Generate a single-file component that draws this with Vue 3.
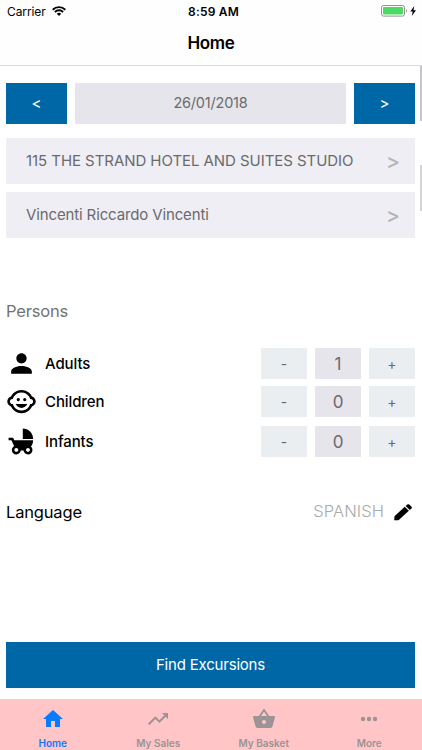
<script setup>
import { reactive } from 'vue'

const selections = ['115 THE STRAND HOTEL AND SUITES STUDIO', 'Vincenti Riccardo Vincenti']

const persons = reactive([
  {
    label: 'Adults',
    count: 1,
    icon: 'M12 12c2.21 0 4-1.79 4-4s-1.79-4-4-4-4 1.79-4 4 1.79 4 4 4zm0 2c-2.67 0-8 1.34-8 4v2h16v-2c0-2.66-5.33-4-8-4z',
  },
  {
    label: 'Children',
    count: 0,
    icon: 'M13.25 10.5a1.25 1.25 0 1 0 2.5 0a1.25 1.25 0 1 0-2.5 0zM8.25 10.5a1.25 1.25 0 1 0 2.5 0a1.25 1.25 0 1 0-2.5 0zM22.94 12.66c.04-.21.06-.43.06-.66s-.02-.45-.06-.66c-.25-1.51-1.36-2.74-2.81-3.17-.53-1.12-1.28-2.1-2.19-2.91C16.36 3.85 14.28 3 12 3s-4.36.85-5.94 2.26c-.92.81-1.67 1.8-2.19 2.91-1.45.43-2.56 1.65-2.81 3.17-.04.21-.06.43-.06.66s.02.45.06.66c.25 1.51 1.36 2.74 2.81 3.17.52 1.11 1.27 2.09 2.17 2.89C7.62 20.14 9.71 21 12 21s4.38-.86 5.97-2.28c.9-.8 1.65-1.79 2.17-2.89 1.44-.43 2.55-1.65 2.8-3.17zM19 14c-.1 0-.19-.02-.29-.03-.2.67-.49 1.29-.86 1.86C16.6 17.74 14.45 19 12 19s-4.6-1.26-5.85-3.17c-.37-.57-.66-1.19-.86-1.86-.1.01-.19.03-.29.03-1.1 0-2-.9-2-2s.9-2 2-2c.1 0 .19.02.29.03.2-.67.49-1.29.86-1.86C7.4 6.26 9.55 5 12 5s4.6 1.26 5.85 3.17c.37.57.66 1.19.86 1.86.1-.01.19-.03.29-.03 1.1 0 2 .9 2 2s-.9 2-2 2zM7.5 14c.76 1.77 2.49 3 4.5 3s3.74-1.23 4.5-3h-9z',
  },
  {
    label: 'Infants',
    count: 0,
    icon: 'M13 2v8h8c0-4.42-3.58-8-8-8zm6.32 13.89C20.37 14.54 21 12.84 21 11H6.44l-.95-2H2v2h2.22s1.89 4.07 2.12 4.42c-1.1.59-1.84 1.75-1.84 3.08C4.5 20.43 6.07 22 8 22c1.76 0 3.22-1.3 3.46-3h2.08c.24 1.7 1.7 3 3.46 3 1.93 0 3.5-1.57 3.5-3.5 0-1.04-.46-1.97-1.18-2.61zM8 20c-.83 0-1.5-.67-1.5-1.5S7.17 17 8 17s1.5.67 1.5 1.5S8.83 20 8 20zm9 0c-.83 0-1.5-.67-1.5-1.5s.67-1.5 1.5-1.5 1.5.67 1.5 1.5-.67 1.5-1.5 1.5z',
  },
])

const tabs = [
  { label: 'Home', active: true, icon: 'M10 20v-6h4v6h5v-8h3L12 3 2 12h3v8z' },
  { label: 'My Sales', icon: 'M16 6l2.29 2.29-4.88 4.88-4-4L2 16.59 3.41 18l6-6 4 4 6.3-6.29L22 12V6z' },
  {
    label: 'My Basket',
    icon: 'M17.21 9l-4.38-6.56c-.19-.28-.51-.42-.83-.42-.32 0-.64.14-.83.43L6.79 9H2c-.55 0-1 .45-1 1 0 .09.01.18.04.27l2.54 9.27c.23.84 1 1.46 1.92 1.46h13c.92 0 1.69-.62 1.93-1.46l2.54-9.27L23 10c0-.55-.45-1-1-1h-4.79zM9 9l3-4.4L15 9H9zm3 8c-1.1 0-2-.9-2-2s.9-2 2-2 2 .9 2 2-.9 2-2 2z',
  },
  {
    label: 'More',
    icon: 'M6 9.8a2.2 2.2 0 1 0 0 4.4a2.2 2.2 0 1 0 0-4.4zM12 9.8a2.2 2.2 0 1 0 0 4.4a2.2 2.2 0 1 0 0-4.4zM18 9.8a2.2 2.2 0 1 0 0 4.4a2.2 2.2 0 1 0 0-4.4z',
  },
]
</script>

<template>
  <div class="screen">
    <header class="header">
      <div class="status">
        <div class="status-left">
          <span class="carrier">Carrier</span>
          <svg class="wifi" viewBox="0 0 14 10">
            <g fill="none" stroke="#000" stroke-width="1.9">
              <path d="M.7 3.7a9 9 0 0 1 12.6 0" />
              <path d="M2.9 6a5.8 5.8 0 0 1 8.2 0" />
            </g>
            <path d="M7 10L4.8 7.8a3.1 3.1 0 0 1 4.4 0z" />
          </svg>
        </div>
        <span class="clock">8:59 AM</span>
        <div class="status-right">
          <svg class="battery" viewBox="0 0 36 12">
            <rect x=".5" y=".5" width="23" height="10.6" rx="2" fill="#fff" stroke="#929292" />
            <rect x="2" y="2" width="20" height="7.6" rx=".8" fill="#4cd964" />
            <path d="M25 4v3.600c1.300-.6 1.300-3 0-3.600z" fill="#929292" />
            <path d="M33.300 1L29.300 6.400h2.400l-.9 4.500 4.200-5.700h-2.500z" />
          </svg>
        </div>
      </div>
      <h1 class="title">Home</h1>
    </header>

    <main class="content">
      <div class="date-row">
        <button class="nav">&lt;</button>
        <div class="date"><span>26/01/2018</span></div>
        <button class="nav">&gt;</button>
      </div>

      <div v-for="(item, i) in selections" :key="item" class="select">
        <span :class="'select-text-' + i">{{ item }}</span>
        <span class="chevron">&gt;</span>
      </div>

      <h2 class="heading">Persons</h2>

      <div class="persons">
        <div v-for="p in persons" :key="p.label" class="person">
          <svg class="person-icon" viewBox="0 0 24 24"><path :d="p.icon" /></svg>
          <span class="person-label">{{ p.label }}</span>
          <button class="step" @click="p.count = Math.max(0, p.count - 1)">-</button>
          <span class="count">{{ p.count }}</span>
          <button class="step" @click="p.count++">+</button>
        </div>
      </div>

      <div class="language">
        <span class="language-label">Language</span>
        <span class="language-value">SPANISH</span>
        <svg class="pencil" viewBox="0 0 18 17">
          <path d="M.2 16.300L.5 12.200 10.700 2.800l4.200 4L4.500 16.300z" />
          <path d="M11.700 2L13.300.6q1-.8 2 0L17.500 2.700q.9.900 0 1.800L15.800 6z" />
        </svg>
      </div>

      <button class="find"><span>Find Excursions</span></button>
      <i class="scroll scroll-page"></i>
      <i class="scroll scroll-list"></i>
    </main>

    <nav class="tabs">
      <a v-for="t in tabs" :key="t.label" class="tab" :class="{ active: t.active }">
        <svg class="tab-icon" viewBox="0 0 24 24"><path :d="t.icon" /></svg>
        <span>{{ t.label }}</span>
      </a>
    </nav>
  </div>
</template>

<style>
body {
  margin: 0;
  background: #fff;
}
</style>

<style scoped>
.screen {
  display: flex;
  flex-direction: column;
  width: 422px;
  height: 750px;
  overflow: hidden;
  box-sizing: border-box;
  background: #fff;
  font-family: Inter, "Liberation Sans", sans-serif;
  color: #000;
}
button {
  border: 0;
  padding: 0;
  margin: 0;
  font: inherit;
}
svg {
  display: block;
}
.header {
  height: 66px;
  box-sizing: border-box;
  border-bottom: 1px solid #dadadc;
  background: #fefefe;
  flex: none;
}
.status {
  display: grid;
  grid-template-columns: 1fr auto 1fr;
  align-items: center;
  height: 22px;
  padding: 0 5px 0 7px;
}
.status-left {
  display: flex;
  align-items: center;
  gap: 6px;
}
.carrier {
  font-size: 12px;
  letter-spacing: -0.1px;
}
.wifi {
  width: 14px;
  height: 10px;
}
.clock {
  font-size: 12px;
  font-weight: 600;
  letter-spacing: 0.2px;
  padding-left: 3px;
}
.status-right {
  display: flex;
  justify-content: flex-end;
}
.battery {
  width: 36px;
  height: 12px;
}
.title {
  margin: 0;
  text-align: center;
  font-size: 17px;
  line-height: 43px;
  font-weight: 600;
  letter-spacing: -0.4px;
}
.content {
  position: relative;
  display: flex;
  flex-direction: column;
  flex: 1;
  padding: 17px 7px 0 6px;
}
.date-row {
  display: grid;
  grid-template-columns: 61px 1fr 61px;
  gap: 8px;
  height: 41px;
  margin-bottom: 14px;
}
.nav {
  background: #0067a6;
  color: #fff;
  font-size: 15px;
}
.date {
  display: flex;
  align-items: center;
  justify-content: center;
  padding-bottom: 2px;
  background: #e6e5eb;
  color: #6b6b6e;
  font-size: 14.5px;
  letter-spacing: -0.2px;
}
.select {
  display: flex;
  align-items: center;
  justify-content: space-between;
  height: 46px;
  margin-bottom: 8px;
  padding: 0 15px 0 20px;
  box-sizing: border-box;
  background: #efeef4;
  color: #6a6a6d;
  font-size: 15px;
}
.select-text-0 {
  letter-spacing: -0.06px;
  padding-bottom: 1px;
}
.select-text-1 {
  letter-spacing: -0.13px;
  padding-bottom: 1px;
}
.chevron {
  color: #b4b4b8;
  font-size: 21px;
  font-weight: 500;
  padding-top: 1px;
}
.heading {
  margin: 55px 0 0;
  line-height: 21px;
  font-size: 16.5px;
  font-weight: 400;
  letter-spacing: -0.2px;
  color: #737373;
}
.persons {
  display: grid;
  gap: 8px;
  margin-top: 26px;
}
.person {
  display: grid;
  grid-template-columns: 31px 1fr 46px 46px 46px;
  column-gap: 8px;
  align-items: center;
  height: 31px;
}
.person:nth-child(2) {
  margin: -1px 0 1px;
}
.person-icon {
  width: 31px;
  height: 31px;
}
.person-label {
  font-size: 15px;
  font-weight: 500;
  letter-spacing: -0.1px;
  padding-bottom: 1px;
}
.step,
.count {
  display: flex;
  align-items: center;
  justify-content: center;
  height: 31px;
  color: #6a6a6d;
  background: #ebeef1;
  font-size: 14px;
}
.count {
  background: #e7e5ec;
  font-size: 17px;
}
.language {
  display: flex;
  align-items: center;
  height: 24px;
  margin-top: 43px;
}
.language-label {
  flex: 1;
  font-size: 16.5px;
  letter-spacing: -0.17px;
}
.language-value {
  font-size: 16.5px;
  font-weight: 300;
  letter-spacing: 0.08px;
  padding-bottom: 2px;
  color: #aaa;
}
.pencil {
  width: 18px;
  height: 17px;
  margin: 0 3px 0 10px;
}
.find {
  height: 46px;
  margin-top: 118px;
  padding-bottom: 1px;
  background: #0067a6;
  color: #fff;
  font-size: 15px;
  letter-spacing: -0.2px;
}
.scroll {
  position: absolute;
  right: 0;
  width: 2px;
  background: #c6c6c8;
}
.scroll-page {
  top: 0;
  height: 55px;
}
.scroll-list {
  top: 99px;
  height: 46px;
  background: #d4d4d6;
}
.tabs {
  display: grid;
  grid-template-columns: repeat(4, 1fr);
  flex: none;
  height: 51px;
  background: #ffc5c7;
}
.tab {
  display: flex;
  flex-direction: column;
  align-items: center;
  padding-top: 8px;
  color: #9b9496;
  font-size: 10px;
  font-weight: 600;
  line-height: 12px;
}
.tab-icon {
  width: 24px;
  height: 24px;
  margin-bottom: 6px;
  fill: currentColor;
}
.active {
  color: #0a7aff;
}
</style>
